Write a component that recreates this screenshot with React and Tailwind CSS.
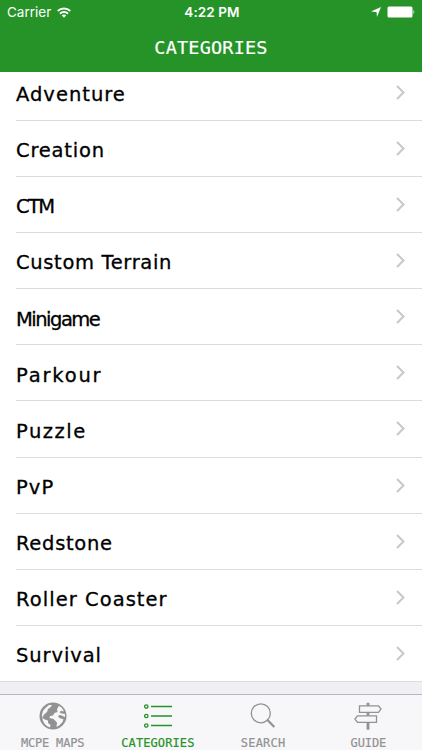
import React from "react";

const categories = [
  { name: "Adventure", tracking: "tracking-[1px]" },
  { name: "Creation", tracking: "tracking-[0.8px]" },
  { name: "CTM", tracking: "tracking-[-1.6px]" },
  { name: "Custom Terrain", tracking: "tracking-[0.65px]" },
  { name: "Minigame", tracking: "tracking-[-1.5px]" },
  { name: "Parkour", tracking: "tracking-[1.8px]" },
  { name: "Puzzle", tracking: "tracking-[1.5px]" },
  { name: "PvP", tracking: "tracking-[1.1px]" },
  { name: "Redstone", tracking: "tracking-[0.7px]" },
  { name: "Roller Coaster", tracking: "tracking-[1.05px]" },
  { name: "Survival", tracking: "tracking-[0.9px]" },
];

function GlobeIcon() {
  return (
    <svg className="w-7 h-7" viewBox="0 0 28 28">
      <circle cx="14" cy="14" r="13.500" fill="#929292" />
      <path
        d="M7 5.500l3-2.500h3l-1.500 2.300L9 7l-1 3-3 2.500-1.800 3.500A11 11 0 0 1 7 5.500z"
        fill="#f7f7f9"
      />
      <path
        d="M20 3.800l3 2.200 2 3.500-3-.8-1.500 1.800 2.500 1 3 .5v3l-3-1.200-2-1-2 1.500 1.500 1.800 4 1.200-1 2.700-3 3.200-3 1.800.5-4.500-3.500-3.500-4-1 .5-2 3-.5 1.500-2.500 3-1-.5-3z"
        fill="#f7f7f9"
      />
      <path
        d="M3.300 16l3.200 1.800 2.500.7v2.500l2.500 2-.5 2.500A11.500 11.500 0 0 1 3.300 16z"
        fill="#f7f7f9"
      />
    </svg>
  );
}

function ListIcon() {
  return (
    <svg
      className="w-7 h-7"
      viewBox="0 0 28 28"
      fill="none"
      stroke="#259327"
      strokeWidth="1.300"
    >
      <circle cx="2.300" cy="4.500" r="1.700" />
      <circle cx="2.300" cy="14" r="1.700" />
      <circle cx="2.300" cy="23.500" r="1.700" />
      <path d="M7 4.500h21M7 14h21M7 23.500h21" />
    </svg>
  );
}

function SearchIcon() {
  return (
    <svg className="w-7 h-7" viewBox="0 0 28 28" fill="none" stroke="#929292">
      <circle cx="11.800" cy="11.300" r="9.500" strokeWidth="1.300" />
      <path d="M18 17.500l7.300 7.500" strokeWidth="2.200" />
    </svg>
  );
}

function GuideIcon() {
  return (
    <svg
      className="w-7 h-7"
      viewBox="0 0 28 28"
      fill="none"
      stroke="#929292"
      strokeWidth="1.300"
    >
      <path d="M5.500 3.800h19l2.500 3.200-2.500 3.300h-19z" />
      <path d="M22.500 13.800h-19L.9 17l2.600 3.300h19z" />
      <path d="M14 .7v3M14 10.300v3.500M14 20.300v7.400" strokeWidth="2.800" />
    </svg>
  );
}

const tabs = [
  { label: "MCPE MAPS", icon: GlobeIcon, spacing: "tracking-[-0.2px]" },
  { label: "CATEGORIES", icon: ListIcon, active: true, spacing: "tracking-[0.1px]" },
  { label: "SEARCH", icon: SearchIcon, spacing: "tracking-[0.2px]" },
  { label: "GUIDE", icon: GuideIcon, spacing: "tracking-[-0.1px]" },
];

function StatusBar() {
  return (
    <div className="grid grid-cols-3 items-center h-6 px-[7px] text-[13.5px] leading-6 font-['Inter',sans-serif]">
      <div className="flex items-center gap-[6px]">
        <span>Carrier</span>
        <svg className="w-[14px] h-[11px]" viewBox="0 0 14 11" fill="none" stroke="#fff" strokeWidth="1.900">
          <path d="M.7 4a9 9 0 0 1 12.600 0M3 6.700a5.700 5.700 0 0 1 8 0" />
          <path d="M7 10.800L4.800 8.500a3.200 3.200 0 0 1 4.400 0z" fill="#fff" stroke="none" />
        </svg>
      </div>
      <div className="pl-[2px] text-center font-semibold tracking-[0.1px]">4:22 PM</div>
      <div className="flex items-center justify-end gap-[6px]">
        <svg className="w-[10px] h-[10px]" viewBox="0 0 10 10" fill="#fff">
          <path d="M10 0L6 10l-.5-5L0 4.500z" />
        </svg>
        <svg className="w-[28px] h-[12px]" viewBox="0 0 28 12" fill="#fff">
          <rect x=".5" y=".5" width="25" height="11" rx="1.500" />
          <path d="M26.500 4c1 .4 1 3.600 0 4z" />
        </svg>
      </div>
    </div>
  );
}

export default function App() {
  return (
    <div className="w-[422px] h-[750px] flex flex-col overflow-hidden bg-[#efeff4] font-['DejaVu_Sans',sans-serif]">
      <header className="h-[72px] shrink-0 bg-[#259327] text-white">
        <StatusBar />
        <h1 className="h-[48px] text-center text-[18.5px] leading-[47px] tracking-[0.2px] font-['DejaVu_Sans_Mono',monospace] [-webkit-text-stroke:0.2px]">
          CATEGORIES
        </h1>
      </header>
      <ul className="h-[610px] shrink-0 flex flex-col justify-end overflow-hidden bg-white border-b border-[#dcdce0]">
        {categories.map(({ name, tracking }, index) => (
          <li
            key={name}
            className={`${
              index < categories.length - 1 ? "h-[56.130px]" : "h-[55.130px]"
            } shrink-0 pl-4`}
          >
            <div
              className={`h-full flex items-center justify-between pr-[17px] ${
                index < categories.length - 1 ? "border-b border-[#dcdcde]" : ""
              }`}
            >
              <span
                className={`text-[19.5px] text-black pt-[5px] [-webkit-text-stroke:0.3px] ${tracking}`}
              >
                {name}
              </span>
              <svg className="w-[9px] h-[15px]" viewBox="0 0 9 15" fill="none" stroke="#c7c7cc" strokeWidth="2">
                <path d="M1 1l6.500 6.500L1 14" />
              </svg>
            </div>
          </li>
        ))}
      </ul>
      <nav className="mt-3 h-[56px] shrink-0 grid grid-cols-4 pr-[1px] bg-[#f7f7f9] border-t border-[#b8b8bc]">
        {tabs.map(({ label, icon: Icon, active, spacing }) => (
          <div
            key={label}
            className={`flex flex-col items-center pt-[7px] ${
              active ? "text-[#259327]" : "text-[#929292]"
            }`}
          >
            <Icon />
            <span
              className={`mt-[5px] text-[12px] leading-[16px] whitespace-nowrap font-['DejaVu_Sans_Mono',monospace] [-webkit-text-stroke:0.2px] ${spacing}`}
            >
              {label}
            </span>
          </div>
        ))}
      </nav>
    </div>
  );
}
